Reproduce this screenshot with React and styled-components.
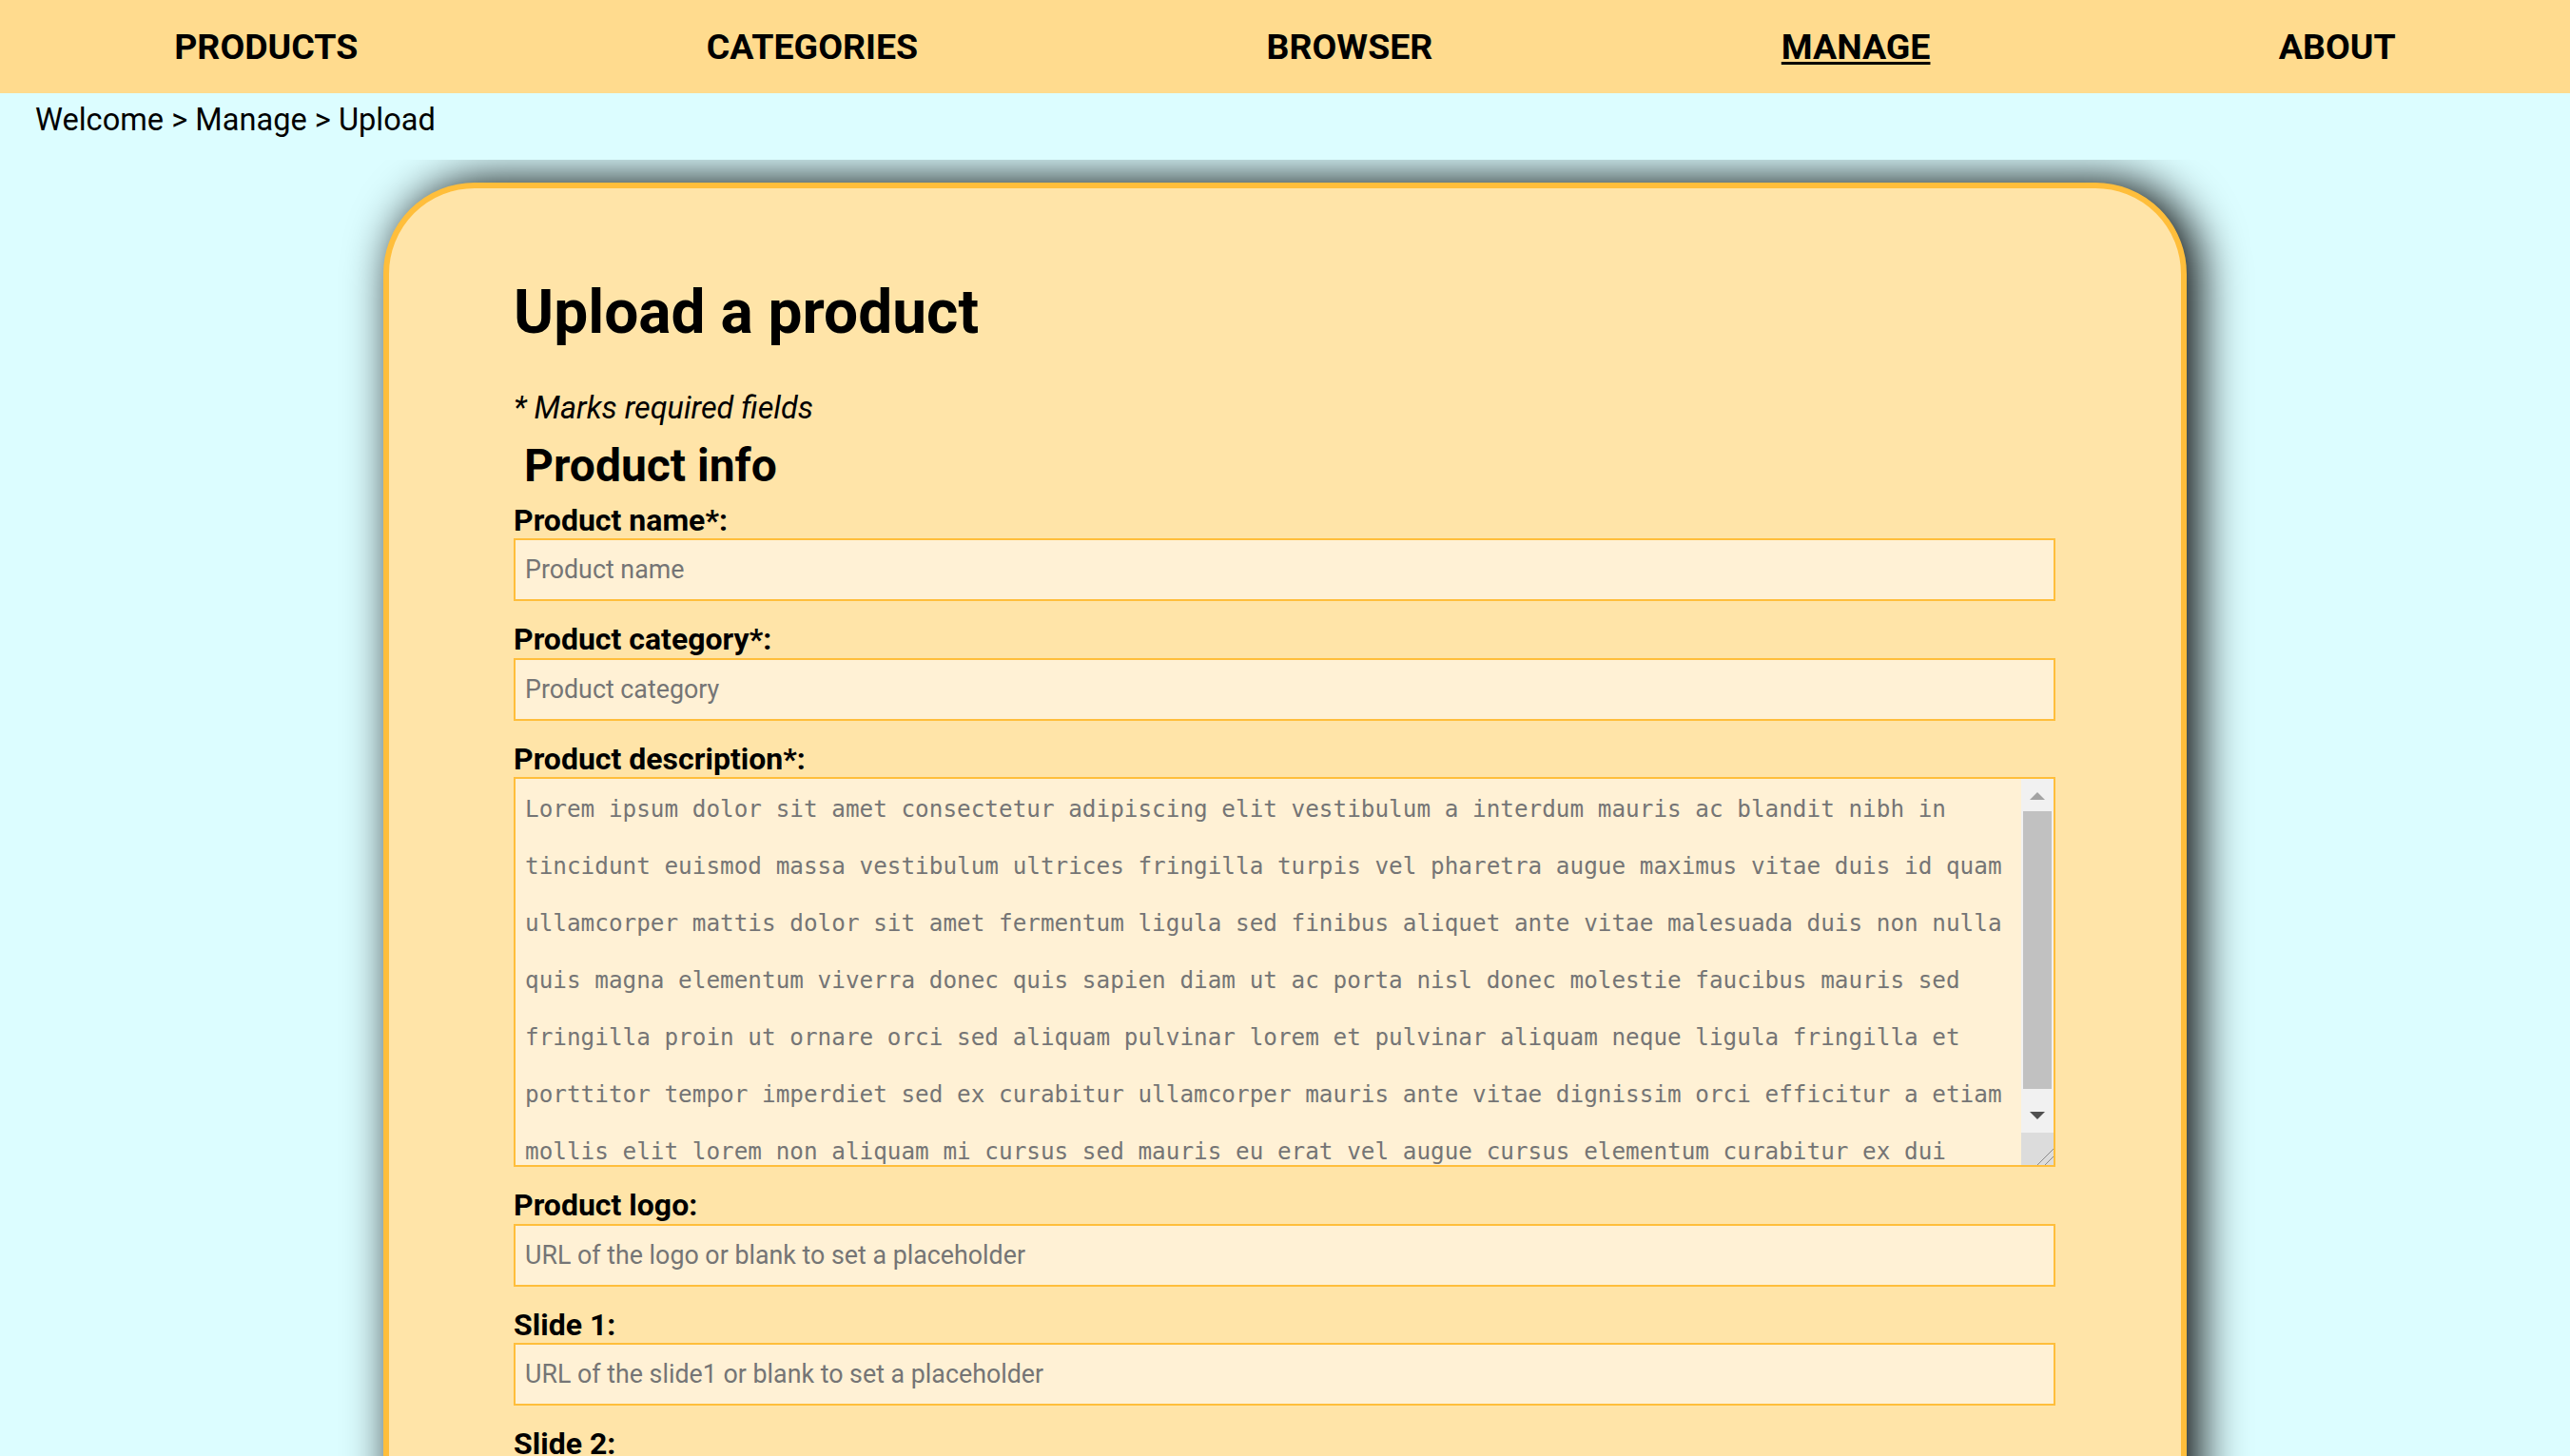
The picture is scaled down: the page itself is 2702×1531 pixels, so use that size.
import React from 'react'
import styled, { createGlobalStyle } from 'styled-components'

const navLinks = [
  { label: 'Products' },
  { label: 'Categories' },
  { label: 'Browser' },
  { label: 'Manage', active: true },
  { label: 'About' },
]

const description =
  'Lorem ipsum dolor sit amet consectetur adipiscing elit vestibulum a interdum mauris ac blandit nibh in ' +
  'tincidunt euismod massa vestibulum ultrices fringilla turpis vel pharetra augue maximus vitae duis id quam ' +
  'ullamcorper mattis dolor sit amet fermentum ligula sed finibus aliquet ante vitae malesuada duis non nulla ' +
  'quis magna elementum viverra donec quis sapien diam ut ac porta nisl donec molestie faucibus mauris sed ' +
  'fringilla proin ut ornare orci sed aliquam pulvinar lorem et pulvinar aliquam neque ligula fringilla et ' +
  'porttitor tempor imperdiet sed ex curabitur ullamcorper mauris ante vitae dignissim orci efficitur a etiam ' +
  'mollis elit lorem non aliquam mi cursus sed mauris eu erat vel augue cursus elementum curabitur ex dui'

const slides = [1, 2, 3]

// scrollbar drawn next to the textarea, the headless browser hides native ones
const ScrollBar = () => (
  <Track>
    <ScrollButton>
      <svg width="34" height="34" viewBox="0 0 34 34">
        <polygon points="9,22 17,14 25,22" fill="#a3a3a3" />
      </svg>
    </ScrollButton>
    <Thumb />
    <TrackGap />
    <ScrollButton>
      <svg width="34" height="34" viewBox="0 0 34 34">
        <polygon points="9,12 25,12 17,20" fill="#505050" />
      </svg>
    </ScrollButton>
    <Resizer>
      <svg width="34" height="34" viewBox="0 0 34 34">
        <line x1="17" y1="34" x2="34" y2="17" stroke="#8a8a8a" strokeWidth="1" />
        <line x1="25" y1="34" x2="34" y2="25" stroke="#8a8a8a" strokeWidth="1" />
      </svg>
    </Resizer>
  </Track>
)

const App = () => {
  return (
    <>
      <GlobalStyle />
      <Navbar>
        {navLinks.map((link) => (
          <NavLink key={link.label} href="#" $active={link.active}>
            {link.label}
          </NavLink>
        ))}
      </Navbar>
      <Breadcrumb>Welcome &gt; Manage &gt; Upload</Breadcrumb>
      <Main>
        <Card>
          <Title>Upload a product</Title>
          <Note>* Marks required fields</Note>
          <SectionTitle>Product info</SectionTitle>

          <Field>
            <Label htmlFor="name">Product name*:</Label>
            <Input id="name" placeholder="Product name" />
          </Field>
          <Field>
            <Label htmlFor="category">Product category*:</Label>
            <Input id="category" placeholder="Product category" />
          </Field>
          <Field>
            <Label htmlFor="description">Product description*:</Label>
            <TextBox>
              <TextArea id="description" defaultValue={description} />
              <ScrollBar />
            </TextBox>
          </Field>
          <Field>
            <Label htmlFor="logo">Product logo:</Label>
            <Input id="logo" placeholder="URL of the logo or blank to set a placeholder" />
          </Field>
          {slides.map((n) => (
            <Field key={n}>
              <Label htmlFor={`slide${n}`}>Slide {n}:</Label>
              <Input id={`slide${n}`} placeholder={`URL of the slide${n} or blank to set a placeholder`} />
            </Field>
          ))}
          <SubmitButton type="button">Upload</SubmitButton>
        </Card>
      </Main>
    </>
  )
}

const GlobalStyle = createGlobalStyle`
  * {
    box-sizing: border-box;
  }

  html,
  body {
    margin: 0;
    padding: 0;
    overflow: hidden;
  }

  body {
    background-color: #dcfdff;
    color: #000;
    font-family: Roboto, "Liberation Sans", sans-serif;
  }
`

const Navbar = styled.nav`
  display: flex;
  align-items: center;
  justify-content: space-around;
  height: 98px;
  background-color: #ffdb8e;
`

const NavLink = styled.a`
  color: #000;
  font-size: 37.5px;
  font-weight: 700;
  text-transform: uppercase;
  text-decoration: ${({ $active }) => ($active ? 'underline' : 'none')};
  text-decoration-thickness: 3px;
  text-underline-offset: 3px;
`

const Breadcrumb = styled.div`
  height: 70px;
  padding: 10px 37px 0;
  font-size: 32.6px;
  line-height: 37.5px;
`

const Main = styled.main`
  overflow: hidden;
  padding: 24px 0 80px;
`

const Card = styled.div`
  width: 1896px;
  margin: 0 auto;
  padding: 93px 132px 80px 131px;
  background-color: #ffe4a8;
  border: 6px solid #ffbe3b;
  border-radius: 96px;
  box-shadow: 12px 0 50px #000;
`

const Title = styled.h1`
  margin: 0;
  font-size: 64px;
  font-weight: 700;
  line-height: 75px;
`

const Note = styled.p`
  margin: 45px 0 0;
  font-size: 32.4px;
  font-style: italic;
  line-height: 37.5px;
`

const SectionTitle = styled.h2`
  margin: 13px 0 11px;
  padding-left: 11px;
  font-size: 48px;
  font-weight: 700;
  line-height: 56px;
`

const Field = styled.div`
  margin-bottom: 22px;
`

const Label = styled.label`
  display: block;
  font-size: 32px;
  font-weight: 700;
  line-height: 37.5px;
`

const Input = styled.input`
  display: block;
  width: 100%;
  height: 66px;
  padding: 0 10px;
  background-color: #fff1d5;
  border: 2px solid #ffbe3b;
  border-radius: 0;
  color: #333;
  font-family: Roboto, "Liberation Sans", sans-serif;
  font-size: 26.8px;
  outline: none;

  &::placeholder {
    color: #757575;
  }
`

const TextBox = styled.div`
  display: flex;
  height: 410px;
  background-color: #fff1d5;
  border: 2px solid #ffbe3b;
`

const TextArea = styled.textarea`
  flex: 1;
  min-width: 0;
  height: 100%;
  padding: 2px 10px;
  background: transparent;
  border: none;
  color: #757575;
  font-family: "DejaVu Sans Mono", "Liberation Mono", monospace;
  font-size: 24.33px;
  line-height: 60px;
  overflow: hidden;
  resize: none;
  outline: none;
`

const Track = styled.div`
  display: flex;
  flex-direction: column;
  width: 34px;
  background-color: #f1f1f1;
`

const ScrollButton = styled.div`
  display: flex;
  height: 34px;
  flex-shrink: 0;
`

const Thumb = styled.div`
  height: 292px;
  flex-shrink: 0;
  margin: 0 2px;
  background-color: #c1c1c1;
`

const TrackGap = styled.div`
  flex: 1;
`

const Resizer = styled.div`
  display: flex;
  height: 34px;
  flex-shrink: 0;
  background-color: #dcdcdc;
`

const SubmitButton = styled.button`
  margin-top: 20px;
  padding: 14px 48px;
  background-color: #ffbe3b;
  border: none;
  border-radius: 12px;
  font-family: Roboto, "Liberation Sans", sans-serif;
  font-size: 32px;
  font-weight: 700;
`

export default App
